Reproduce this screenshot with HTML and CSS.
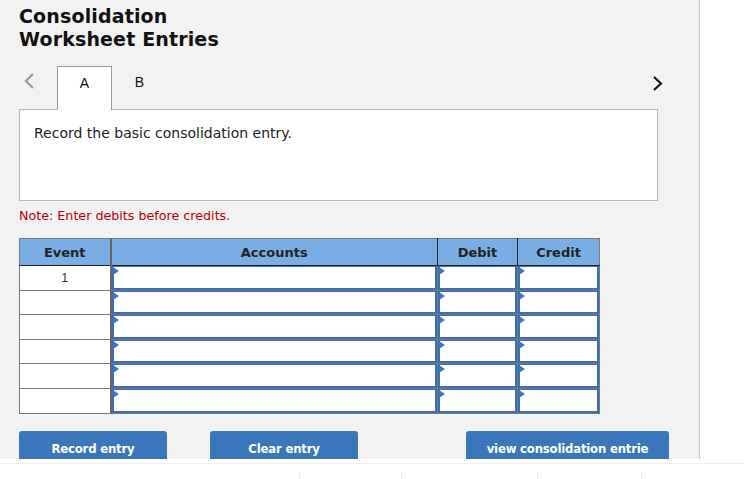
FILE: index.html
```html
<!DOCTYPE html>
<html>
<head>
<meta charset="utf-8">
<link rel="stylesheet" href="styles.css">
</head>
<body>
<div class="panel">
  <h1 class="title">Consolidation<br>Worksheet Entries</h1>
  <div class="tabbar">
    <span class="chev chev-left"><svg width="12" height="18" viewBox="0 0 12 18"><path d="M10 2 L3 9 L10 16" fill="none" stroke="#9a9a9a" stroke-width="2.2"/></svg></span>
    <div class="tab tab-active">A</div>
    <div class="tab">B</div>
    <span class="spacer"></span>
    <span class="chev chev-right"><svg width="12" height="18" viewBox="0 0 12 18"><path d="M2 3 L9 9.5 L2 16" fill="none" stroke="#111" stroke-width="2.2"/></svg></span>
  </div>
  <div class="question">Record the basic consolidation entry.</div>
  <p class="note">Note: Enter debits before credits.</p>
  <table class="entries">
    <thead>
      <tr><th class="c-event">Event</th><th class="c-acc">Accounts</th><th class="c-deb">Debit</th><th class="c-cred">Credit</th></tr>
    </thead>
    <tbody>
      <tr><td class="ev">1</td><td class="in"><div class="box"></div></td><td class="in"><div class="box"></div></td><td class="in"><div class="box"></div></td></tr>
      <tr><td class="ev"></td><td class="in"><div class="box"></div></td><td class="in"><div class="box"></div></td><td class="in"><div class="box"></div></td></tr>
      <tr><td class="ev"></td><td class="in"><div class="box"></div></td><td class="in"><div class="box"></div></td><td class="in"><div class="box"></div></td></tr>
      <tr><td class="ev"></td><td class="in"><div class="box"></div></td><td class="in"><div class="box"></div></td><td class="in"><div class="box"></div></td></tr>
      <tr><td class="ev"></td><td class="in"><div class="box"></div></td><td class="in"><div class="box"></div></td><td class="in"><div class="box"></div></td></tr>
      <tr><td class="ev"></td><td class="in"><div class="box"></div></td><td class="in"><div class="box"></div></td><td class="in"><div class="box"></div></td></tr>
    </tbody>
  </table>
  <div class="buttons">
    <button class="btn btn-record">Record entry</button>
    <button class="btn btn-clear">Clear entry</button>
    <button class="btn btn-view">view consolidation entrie</button>
  </div>
</div>
<div class="below">
  <div class="seg s1"></div>
  <div class="seg s2"></div>
  <div class="seg s3"></div>
  <div class="seg s4"></div>
  <div class="seg s5"></div>
</div>
</body>
</html>
```
FILE: styles.css
```css
* { box-sizing: border-box; }
html, body { margin: 0; padding: 0; background: #fff; }
body { font-family: "DejaVu Sans", Verdana, sans-serif; color: #222; width: 744px; height: 479px; overflow: hidden; }

.panel {
  width: 700px;
  height: 459px;
  background: #f2f2f2;
  border-right: 1px solid #c6c6c6;
  padding: 5px 0 0 19px;
  overflow: hidden;
}

.title {
  margin: 0;
  font-size: 19px;
  line-height: 23px;
  font-weight: bold;
  letter-spacing: 0.15px;
  color: #111;
}

.tabbar {
  display: flex;
  align-items: flex-start;
  margin-top: 15px;
  width: 646px;
  height: 43px;
}
.chev { display: block; }
.chev-left { width: 38px; padding: 6px 0 0 4px; }
.chev-right { padding: 8px 0 0 0; width: 13px; }
.spacer { flex: 1; }
.tab {
  width: 55px;
  height: 43px;
  padding-top: 8px;
  text-align: center;
  font-size: 14px;
  line-height: 16px;
  color: #111;
  font-family: "Liberation Sans", Arial, sans-serif;
}
.tab-active {
  background: #fff;
  border: 1px solid #9a9a9a;
  border-bottom: none;
  position: relative;
  z-index: 1;
  height: 44px;
}

.question {
  width: 639px;
  height: 92px;
  background: #fff;
  border: 1px solid #b8b8b8;
  padding: 15px 0 0 14px;
  font-size: 14px;
  line-height: 17px;
  color: #222;
}

.note {
  margin: 7px 0 0 0;
  font-size: 12.7px;
  line-height: 16px;
  color: #c00000;
}

.entries {
  margin-top: 14px;
  border-collapse: collapse;
  table-layout: fixed;
  width: 581px;
}
.entries th {
  background: #79ade3;
  height: 27px;
  font-size: 13px;
  font-weight: bold;
  color: #222;
  border: 1px solid #222;
  border-top-color: #7a7a7a;
  padding: 0;
}
.entries th.c-event { border-left-color: #7a7a7a; }
.entries th.c-cred { border-right-color: #7a7a7a; }
.c-event { width: 91px; }
.c-acc { width: 327px; }
.c-deb { width: 80px; }
.c-cred { width: 82px; }

.entries td {
  height: 24.6px;
  padding: 0;
  border: 1px solid #777;
  background: #fff;
}
.entries td.ev {
  text-align: center;
  font-size: 12.5px;
  color: #333;
  vertical-align: middle;
  font-family: "Liberation Sans", Arial, sans-serif;
}
.entries th.c-event, .entries td.ev { border-right: 2px solid #666; }
.entries td.in { position: relative; }
.box {
  position: absolute;
  inset: 0;
  border: 2px solid #3b6fb3;
  border-top-width: 1px;
  background: #fff;
}
.box::before {
  content: "";
  position: absolute;
  left: -1px;
  top: 0;
  border-left: 6px solid #3b78c4;
  border-top: 4px solid transparent;
  border-bottom: 4px solid transparent;
}

.buttons {
  position: relative;
  height: 28px;
  margin-top: 17px;
}
.btn {
  position: absolute;
  top: 0;
  height: 28px;
  padding: 9px 0 0 0;
  line-height: 16px;
  display: block;
  text-align: center;
  border: none;
  border-radius: 3px 3px 0 0;
  background: #3b76ba;
  color: #fff;
  font-family: "DejaVu Sans Condensed", "DejaVu Sans", sans-serif;
  font-weight: bold;
  font-size: 13px;
  letter-spacing: -0.2px;
}
.btn-record { left: 0; width: 148px; }
.btn-clear { left: 191px; width: 148px; }
.btn-view { left: 447px; width: 203px; }

.below {
  margin-top: 4px;
  border-top: 1px solid #eeeeee;
  display: flex;
  height: 15px;
  padding-top: 6px;
}
.seg { height: 9px; border-left: 1px solid #ececec; }
.s1 { width: 299px; border-left: none; }
.s2 { width: 102px; }
.s3 { width: 136px; }
.s4 { width: 104px; }
.s5 { flex: 1; }
```
